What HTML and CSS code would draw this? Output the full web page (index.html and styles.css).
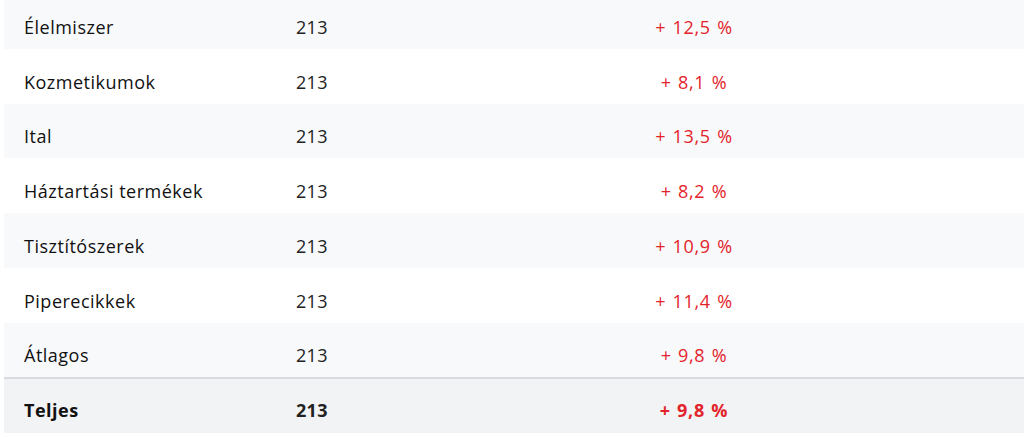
FILE: index.html
```html
<!DOCTYPE html>
<html lang="hu">
<head>
<meta charset="utf-8">
<link rel="stylesheet" href="styles.css">
</head>
<body>
<div class="table">
  <div class="row stripe"><div class="name">Élelmiszer</div><div class="num">213</div><div class="pct">+ 12,5 %</div></div>
  <div class="row"><div class="name">Kozmetikumok</div><div class="num">213</div><div class="pct">+ 8,1 %</div></div>
  <div class="row stripe"><div class="name">Ital</div><div class="num">213</div><div class="pct">+ 13,5 %</div></div>
  <div class="row"><div class="name">Háztartási termékek</div><div class="num">213</div><div class="pct">+ 8,2 %</div></div>
  <div class="row stripe"><div class="name">Tisztítószerek</div><div class="num">213</div><div class="pct">+ 10,9 %</div></div>
  <div class="row"><div class="name">Piperecikkek</div><div class="num">213</div><div class="pct">+ 11,4 %</div></div>
  <div class="row stripe"><div class="name">Átlagos</div><div class="num">213</div><div class="pct">+ 9,8 %</div></div>
  <div class="row total"><div class="name">Teljes</div><div class="num">213</div><div class="pct">+ 9,8 %</div></div>
</div>
</body>
</html>
```
FILE: styles.css
```css
html, body {
  margin: 0;
  padding: 0;
  background: #ffffff;
}
body {
  font-family: "Open Sans", "Noto Sans", sans-serif;
  font-size: 18px;
  color: #111111;
  overflow: hidden;
}
.table {
  margin: -6px 0 0 4px;
}
.row {
  display: grid;
  grid-template-columns: 272px 272px 292px 1fr;
  align-items: center;
  height: 54.75px;
  box-sizing: border-box;
  padding-top: 11px;
}
.row.stripe {
  background: #f8f9fb;
}
.row.total {
  height: 56px;
  background: #f2f3f5;
  border-top: 2px solid #d9dbe0;
  padding-top: 8px;
}
.name {
  padding-left: 20px;
  font-weight: 500;
  letter-spacing: 0.5px;
}
.num {
  padding-left: 20px;
  font-weight: 400;
  color: #222222;
  letter-spacing: 0.3px;
}
.total .name, .total .num {
  font-weight: 700;
}
.pct {
  text-align: center;
  color: #e3232b;
  font-weight: 500;
  letter-spacing: 0.7px;
  word-spacing: 1px;
}
.total .pct {
  font-weight: 700;
}
```
